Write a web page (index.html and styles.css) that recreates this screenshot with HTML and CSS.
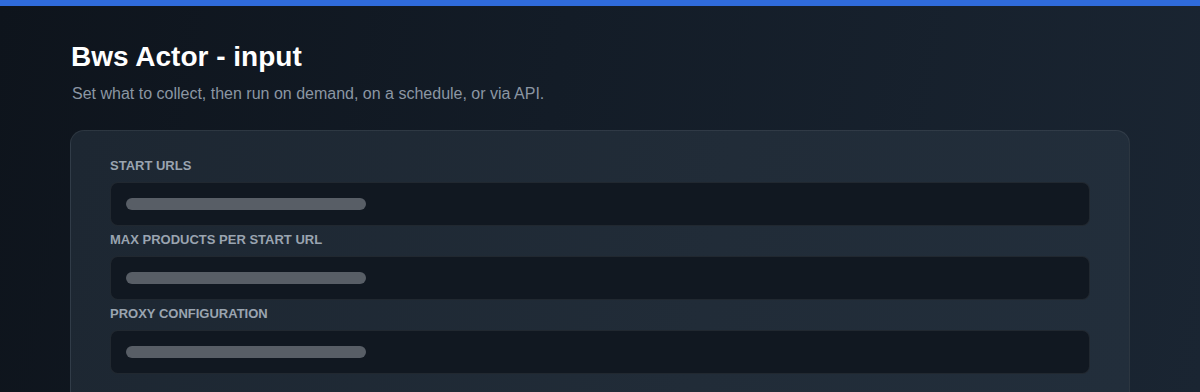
FILE: index.html
```html
<!DOCTYPE html>
<html>
<head>
	<title>Bws Actor - input</title>
	<link rel="stylesheet" href="styles.css">
</head>
<body>
	<div class="topbar"></div>
	<div class="page">
		<h1 class="title">Bws Actor - input</h1>
		<p class="subtitle">Set what to collect, then run on demand, on a schedule, or via API.</p>
		<div class="card">
			<div class="field">
				<label class="label">Start URLs</label>
				<div class="input"><span class="placeholder"></span></div>
			</div>
			<div class="field">
				<label class="label">Max products per start URL</label>
				<div class="input"><span class="placeholder"></span></div>
			</div>
			<div class="field">
				<label class="label">Proxy configuration</label>
				<div class="input"><span class="placeholder"></span></div>
			</div>
		</div>
	</div>
</body>
</html>
```

FILE: styles.css
```css
html, body {
	margin: 0;
	height: 100%;
}
body {
	font-family: "Liberation Sans", Arial, sans-serif;
	background: linear-gradient(100deg, #0e141c 0%, #131c27 45%, #1a2532 100%);
	overflow: hidden;
}
.topbar {
	height: 6px;
	background-color: #2f6bdb;
}
.page {
	padding: 0 70px;
}
.title {
	margin: 34px 0 0 1px;
	font-size: 28px;
	line-height: 34px;
	font-weight: bold;
	color: #fff;
}
.subtitle {
	margin: 10px 0 0 2px;
	font-size: 16px;
	line-height: 20px;
	color: #8b96a3;
}
.card {
	margin-top: 26px;
	padding: 26px 39px 40px;
	border: 1px solid rgba(255, 255, 255, 0.07);
	border-radius: 14px;
	background: linear-gradient(100deg, #1d2732 0%, #212c38 60%, #222e3b 100%);
	display: flex;
	flex-direction: column;
	gap: 4px;
}
.label {
	display: block;
	margin-bottom: 7px;
	font-size: 13px;
	line-height: 18px;
	font-weight: bold;
	text-transform: uppercase;
	color: #9aa4b0;
}
.input {
	height: 42px;
	padding: 0 15px;
	border: 1px solid rgba(255, 255, 255, 0.07);
	border-radius: 8px;
	background-color: #111821;
	display: flex;
	align-items: center;
}
.field + .field .label {
	margin-top: 1px;
}
.placeholder {
	width: 240px;
	height: 12px;
	border-radius: 6px;
	background-color: #585e66;
}
```
